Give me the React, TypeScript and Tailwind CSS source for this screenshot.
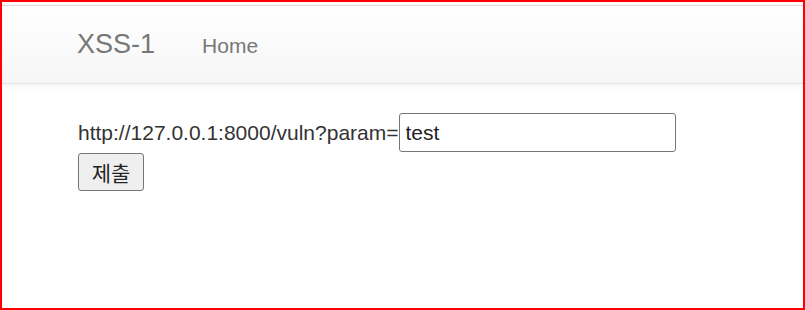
import React from 'react';

export default function App() {
  return (
    <div className="w-[805px] h-[310px] border-2 border-[#ff0000] bg-white overflow-hidden font-['Liberation_Sans',Arial,sans-serif]">
      <div className="pt-[3px]">
        {/* Navbar */}
        <nav className="h-[79px] border-t-[1.5px] border-t-[#dadada] border-b border-b-[#e3e3e3] bg-gradient-to-b from-white to-[#f6f6f6] shadow-[0_2px_6px_rgba(0,0,0,0.06)] flex items-center pl-[75px]">
          <span className="text-[27px] leading-none text-[#777777]">XSS-1</span>
          <span className="ml-[47px] text-[21px] leading-none text-[#777777] mt-[2px]">Home</span>
        </nav>

        {/* Form */}
        <div className="pl-[76px] pt-[29px]">
          <div className="flex items-center h-[39px]">
            <span className="text-[21px] text-[#333333] leading-none">http://127.0.0.1:8000/vuln?param=</span>
            <input
              type="text"
              defaultValue="test"
              className="w-[277px] h-[39px] border-[1.5px] border-[#767676] rounded-[3px] px-[6px] text-[21px] text-[#222222] outline-none bg-white font-['Liberation_Sans',Arial,sans-serif]"
            />
          </div>
          <button className="mt-[1px] w-[66px] h-[38px] bg-[#efefef] border-[1.5px] border-[#767676] rounded-[3px] text-[21px] text-[#222222] flex items-center justify-center font-['Noto_Sans_CJK_KR','Noto_Sans',sans-serif] leading-none">
            제출
          </button>
        </div>
      </div>
    </div>
  );
}
